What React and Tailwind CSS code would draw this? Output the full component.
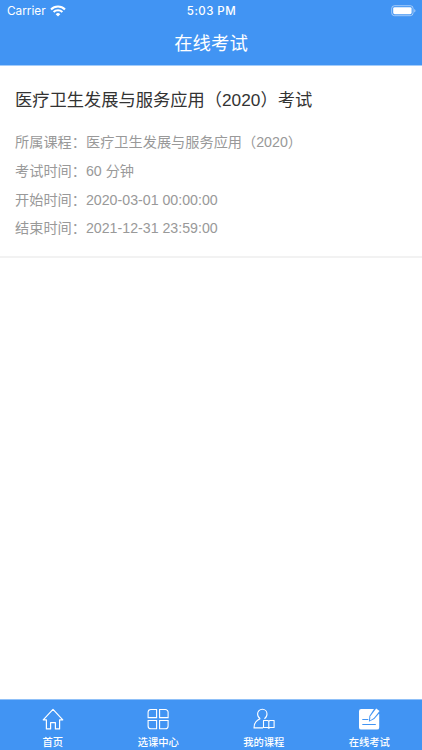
const exam = {
  title: '医疗卫生发展与服务应用（2020）考试',
  rows: [
    { label: '所属课程：', value: '医疗卫生发展与服务应用（2020）' },
    { label: '考试时间：', value: '60 分钟' },
    { label: '开始时间：', value: '2020-03-01 00:00:00' },
    { label: '结束时间：', value: '2021-12-31 23:59:00' },
  ],
}

function HomeIcon() {
  return (
    <svg width="24" height="24" viewBox="0 0 24 24" fill="none" stroke="white" strokeWidth="1.2" strokeLinejoin="round">
      <path d="M12 2.4 2.2 12.8H5.4V21.9H9.6V15.6H14.4V21.9H18.6V12.8H21.8Z" />
    </svg>
  )
}

function CourseIcon() {
  return (
    <svg width="24" height="24" viewBox="0 0 24 24" fill="none" stroke="white" strokeWidth="1.1">
      <path d="M4.9 2.5H10.6V10.6H2.1V5.3A2.8 2.8 0 0 1 4.9 2.5Z" />
      <path d="M13.6 2.5H19.3A2.8 2.8 0 0 1 22.1 5.3V10.6H13.6Z" />
      <path d="M2.1 13.5H10.6V21.8H4.9A2.8 2.8 0 0 1 2.1 19Z" />
      <path d="M13.6 13.5H22.1V19A2.8 2.8 0 0 1 19.3 21.8H13.6Z" />
    </svg>
  )
}

function MyCourseIcon() {
  return (
    <svg width="24" height="24" viewBox="0 0 24 24" fill="none" stroke="white" strokeWidth="1.1" strokeLinejoin="round">
      <path d="M8.2 11.7C6.6 10.8 5.6 9.1 5.6 7.1C5.6 4.4 7.7 2.3 10.3 2.3C13 2.3 15 4.4 15 7.1C15 9.1 14 10.8 12.4 11.7" />
      <path d="M8.2 11.7C4.3 13.2 2 16.4 2 20.9H11" />
      <path d="M11.5 13.5H15.7L16.8 14.2L17.9 13.5H22.1V20.5H17.9L16.8 21.2L15.7 20.5H11.5ZM16.8 14.2V20.8" />
    </svg>
  )
}

function ExamIcon() {
  return (
    <svg width="24" height="24" viewBox="0 0 24 24">
      <path d="M4.2 2H18L22.2 7V20.4A2.2 2.2 0 0 1 20 22.6H4.2A2.2 2.2 0 0 1 2 20.4V4.2A2.2 2.2 0 0 1 4.2 2Z" fill="white" />
      {/* gap between the sheet and the pen */}
      <path d="M17.6 1 12.4 8.9 11.9 14.7 17.3 12.1 23 5.4V1Z" fill="#4194f3" />
      <path d="M19.2 1.6 22.5 4 16.9 11 13 13.4 13.4 9.3Z" fill="white" />
      <path d="M5.3 12.5H11.3M5.3 17.5H18.8" stroke="#4194f3" strokeWidth="1" />
    </svg>
  )
}

const tabs = [
  { name: '首页', Icon: HomeIcon },
  { name: '选课中心', Icon: CourseIcon },
  { name: '我的课程', Icon: MyCourseIcon },
  { name: '在线考试', Icon: ExamIcon },
]

function StatusBar() {
  return (
    <div className="grid h-[22px] grid-cols-3 items-center pl-[7px] pr-[6px] font-[Inter,sans-serif] text-[12px] leading-none">
      <div className="flex items-center gap-[4px]">
        <span className="pt-px text-[11.8px]">Carrier</span>
        <svg width="16" height="12" viewBox="0 0 16 12" fill="none" stroke="white" strokeWidth="2.1">
          <path d="M1 4.4A10 10 0 0 1 15 4.4" />
          <path d="M3.6 7.1A6.3 6.3 0 0 1 12.4 7.1" />
          <path d="M5.7 9.2A3.3 3.3 0 0 1 10.3 9.2L8 11.5Z" fill="white" stroke="none" />
        </svg>
      </div>
      <span className="pt-px text-center text-[11.5px] font-medium tracking-[0.45px]">5:03 PM</span>
      <svg className="justify-self-end" width="26" height="12" viewBox="0 0 26 12">
        <rect x="1.7" y="0.7" width="21.4" height="10" rx="2.8" fill="none" stroke="white" strokeOpacity="0.5" />
        <rect x="3.2" y="2.2" width="18.4" height="7" rx="1.4" fill="white" />
        <path d="M24.2 3.9Q25.5 4.4 25.5 5.7Q25.5 7 24.2 7.5Z" fill="white" fillOpacity="0.5" />
      </svg>
    </div>
  )
}

export default function App() {
  return (
    <div className="flex h-[750px] w-full flex-col overflow-hidden bg-white font-['Liberation_Sans','Noto_Sans_CJK_SC',sans-serif]">
      <header className="h-[66px] shrink-0 border-b border-[#a3ccfa] bg-[#4194f3] text-white">
        <StatusBar />
        <h1 className="text-center text-[18.4px] leading-[43px]">在线考试</h1>
      </header>

      <main className="flex-1">
        <section className="h-[192px] border-b-2 border-[#f2f2f2] px-[15px] pt-[20px]">
          <h2 className="whitespace-nowrap text-[17.25px] leading-[28px] text-[#333]">{exam.title}</h2>
          <div className="mt-[14.4px] text-[14.2px] leading-[28.6px] text-[#999]">
            {exam.rows.map((row) => (
              <p key={row.label} className="whitespace-nowrap">
                <span>{row.label}</span>
                <span>{row.value}</span>
              </p>
            ))}
          </div>
        </section>
      </main>

      <nav className="grid h-[51px] shrink-0 grid-cols-4 border-t border-[#8fc0f8] bg-[#4194f3] text-white">
        {tabs.map(({ name, Icon }) => (
          <div key={name} className="flex flex-col items-center pt-[7px]">
            <Icon />
            <span className="mt-[5px] text-[10.3px] font-medium leading-[14px]">{name}</span>
          </div>
        ))}
      </nav>
    </div>
  )
}
